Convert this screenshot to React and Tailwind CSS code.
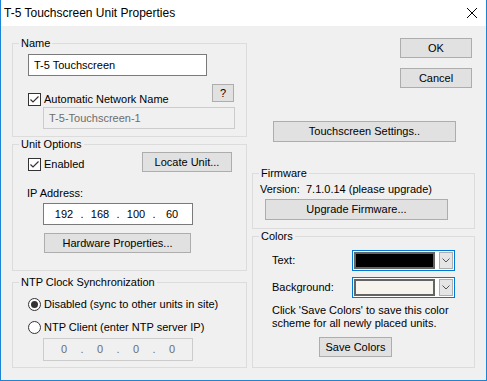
import React from 'react';

function Btn({ className = '', children }) {
  return (
    <div className={`flex items-center justify-center border border-[#adadad] bg-[#e1e1e1] ${className}`}>
      {children}
    </div>
  );
}

function Group({ label, className = '', children }) {
  return (
    <div className={`relative border border-[#dcdcdc] ${className}`}>
      <span className="absolute -top-[8px] left-[6px] bg-[#f0f0f0] px-[2px]">{label}</span>
      {children}
    </div>
  );
}

function Check() {
  return (
    <svg width="13" height="13" viewBox="0 0 13 13" className="shrink-0">
      <rect x="0.5" y="0.5" width="12" height="12" fill="#fff" stroke="#333" />
      <path d="M2.5 6.5 L5 9 L10.5 3.5" fill="none" stroke="#333" strokeWidth="1.2" />
    </svg>
  );
}

function Radio({ on }) {
  return (
    <svg width="13" height="13" viewBox="0 0 13 13" className="shrink-0">
      <circle cx="6.5" cy="6.5" r="6" fill="#fff" stroke="#333" />
      {on && <circle cx="6.5" cy="6.5" r="3.5" fill="#333" />}
    </svg>
  );
}

function IpBox({ parts, disabled, className = '' }) {
  return (
    <div
      className={`flex items-center pl-[6px] border ${
        disabled ? 'border-[#cccccc] bg-[#f0f0f0] text-[#6d6d6d]' : 'border-[#7a7a7a] bg-white'
      } ${className}`}
    >
      {parts.map((p, i) => (
        <React.Fragment key={i}>
          {i > 0 && <span className="w-[8px] text-center">.</span>}
          <span className="w-[28px] text-center">{p}</span>
        </React.Fragment>
      ))}
    </div>
  );
}

function ColorCombo({ color }) {
  return (
    <div className="flex w-[103px] h-[21px] gap-[4px] border border-[#0078d7] bg-white p-[1px]">
      <div className={`flex-1 border-2 border-[#646464] ${color}`} />
      <div className="flex w-[14px] items-center justify-center border border-[#adadad] bg-[#e5e5e5]">
        <svg width="8" height="5" viewBox="0 0 8 5">
          <path d="M0.5 0.5 L4 4 L7.5 0.5" fill="none" stroke="#555" />
        </svg>
      </div>
    </div>
  );
}

export default function App() {
  return (
    <div className="flex h-[381px] w-[487px] flex-col border-x border-b border-[#1c84d6] bg-[#f0f0f0] font-['Liberation_Sans',Arial,sans-serif] text-[11px] leading-[15px] text-black">
      <div className="flex h-[26px] shrink-0 items-center justify-between bg-white pl-[3px] pr-[9px] text-[12px]">
        <span>T-5 Touchscreen Unit Properties</span>
        <svg width="10" height="10" viewBox="0 0 10 10">
          <path d="M0 0 L10 10 M10 0 L0 10" stroke="#000" strokeWidth="1" />
        </svg>
      </div>

      <div className="flex gap-[5px] px-[11px]">
        {/* left column */}
        <div className="flex w-[236px] flex-col">
          <Group label="Name" className="mt-[17px] h-[94px] pt-[10px]">
            <div className="ml-[15px] flex h-[22px] w-[179px] items-center border border-[#7a7a7a] bg-white px-[5px]">
              T-5 Touchscreen
            </div>
            <div className="mt-[8px] flex h-[23px] items-end justify-between">
              <div className="ml-[15px] flex items-center gap-[3px]">
                <Check />
                <span>Automatic Network Name</span>
              </div>
              <Btn className="mr-[12px] h-[18px] w-[22px] self-start">?</Btn>
            </div>
            <div className="ml-[30px] flex h-[22px] w-[192px] items-center border border-[#cccccc] px-[5px] text-[#6d6d6d]">
              T-5-Touchscreen-1
            </div>
          </Group>

          <Group label="Unit Options" className="mt-[7px] h-[127px] pt-[7px]">
            <div className="flex items-end justify-between">
              <div className="ml-[15px] flex items-center gap-[3px]">
                <Check />
                <span>Enabled</span>
              </div>
              <Btn className="mr-[14px] h-[20px] w-[90px]">Locate Unit...</Btn>
            </div>
            <div className="ml-[14px] mt-[14px]">IP Address:</div>
            <IpBox parts={['192', '168', '100', '60']} className="ml-[30px] mt-[2px] h-[22px] w-[150px]" />
            <Btn className="ml-[31px] mt-[8px] h-[20px] w-[147px]">Hardware Properties...</Btn>
          </Group>

          <Group label="NTP Clock Synchronization" className="mt-[11px] h-[86px] pt-[14px]">
            <div className="ml-[15px] flex items-center gap-[3px]">
              <Radio on />
              <span>Disabled (sync to other units in site)</span>
            </div>
            <div className="ml-[15px] mt-[8px] flex items-center gap-[3px]">
              <Radio />
              <span>NTP Client (enter NTP server IP)</span>
            </div>
            <IpBox parts={['0', '0', '0', '0']} disabled className="ml-[30px] mt-[3px] h-[23px] w-[150px]" />
          </Group>
        </div>

        {/* right column */}
        <div className="flex w-[224px] flex-col">
          <div className="mt-[12px] flex flex-col items-end gap-[10px] pr-[3px]">
            <Btn className="h-[20px] w-[72px]">OK</Btn>
            <Btn className="h-[20px] w-[72px]">Cancel</Btn>
          </div>
          <Btn className="ml-[21px] mt-[33px] h-[21px] w-[183px]">Touchscreen Settings..</Btn>

          <Group label="Firmware" className="mt-[31px] h-[56px] pt-[8px]">
            <div className="ml-[7px] flex">
              <span className="w-[46px]">Version:</span>
              <span>7.1.0.14 (please upgrade)</span>
            </div>
            <Btn className="ml-[12px] mt-[2px] h-[21px] w-[183px]">Upgrade Firmware...</Btn>
          </Group>

          <Group label="Colors" className="mt-[7px] h-[132px] pt-[13px]">
            <div className="ml-[19px] flex items-center">
              <span className="w-[80px]">Text:</span>
              <ColorCombo color="bg-black" />
            </div>
            <div className="ml-[19px] mt-[6px] flex items-center">
              <span className="w-[80px]">Background:</span>
              <ColorCombo color="bg-[#f7f4ee]" />
            </div>
            <p className="ml-[19px] mt-[6px] leading-[13px]">
              Click 'Save Colors' to save this color
              <br />
              scheme for all newly placed units.
            </p>
            <Btn className="ml-[66px] mt-[7px] h-[20px] w-[73px]">Save Colors</Btn>
          </Group>
        </div>
      </div>
    </div>
  );
}
